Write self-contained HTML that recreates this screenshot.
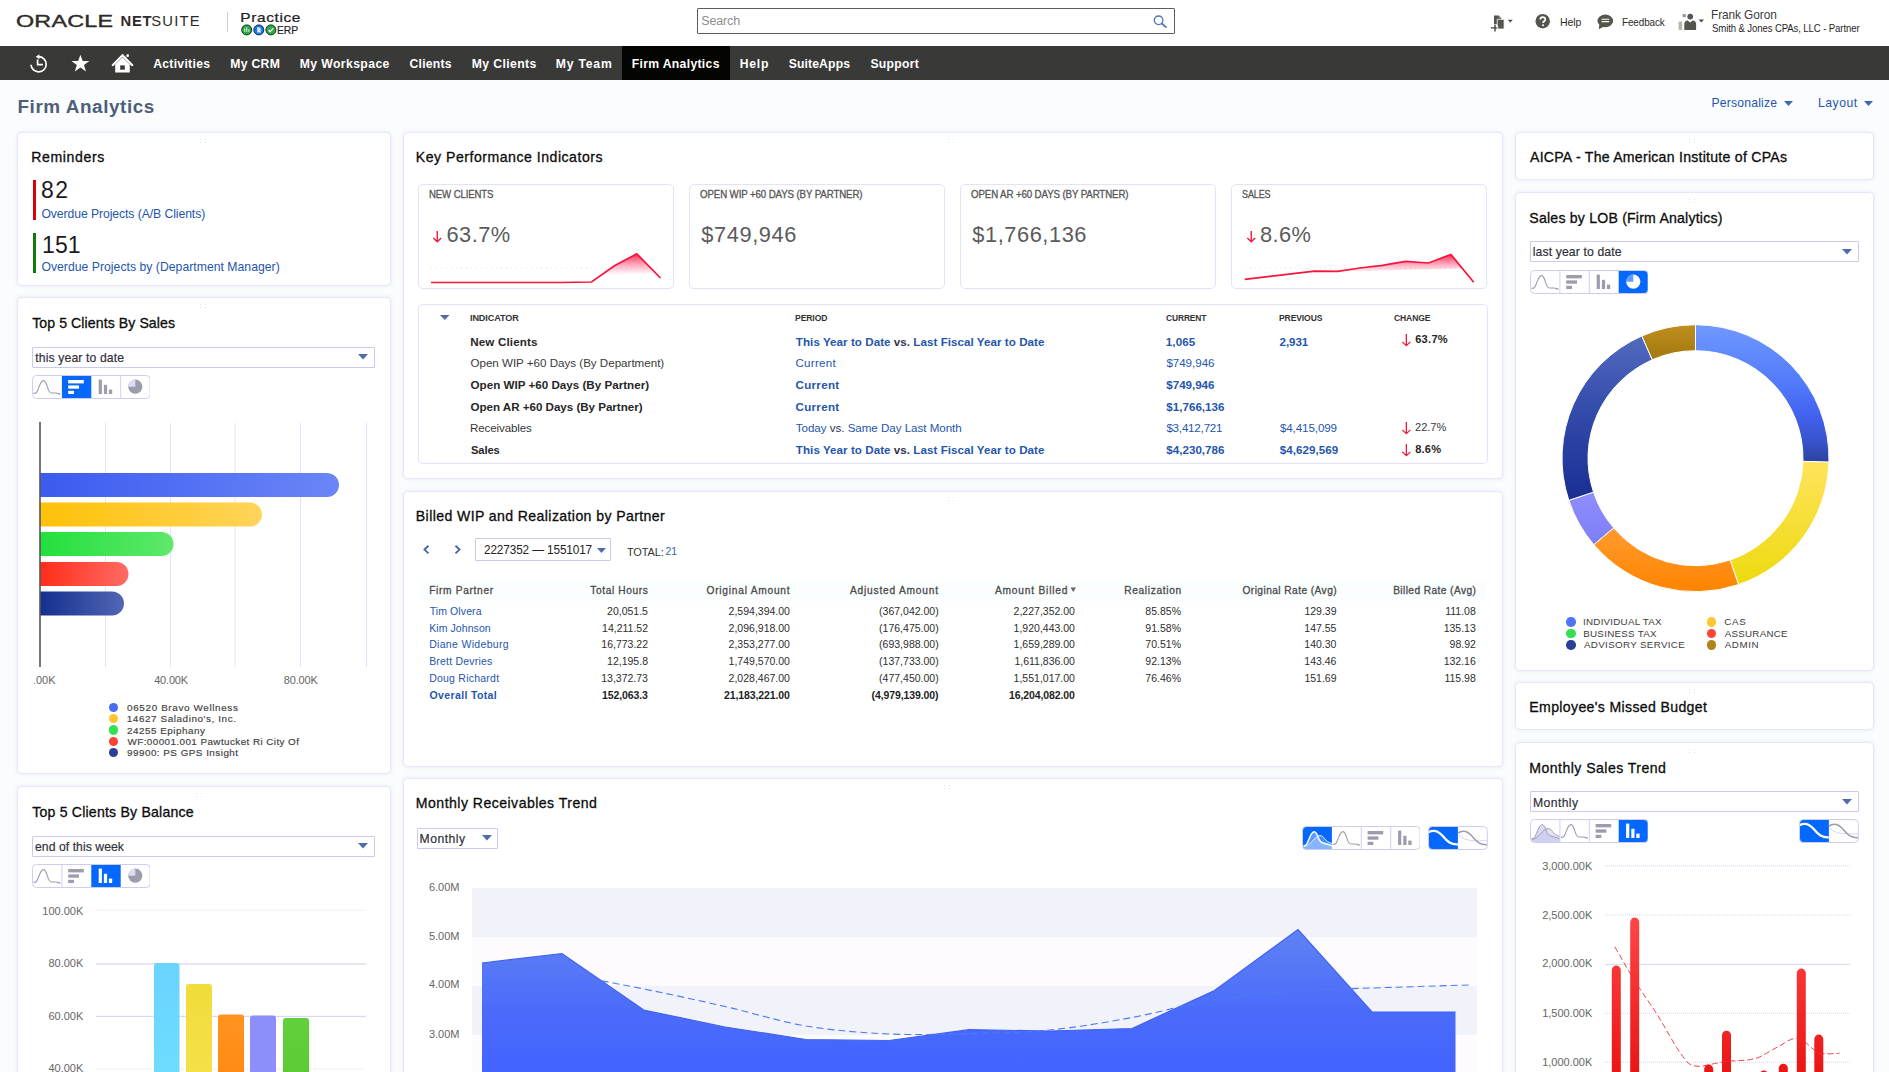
<!DOCTYPE html>
<html lang="en"><head><meta charset="utf-8"><title>Firm Analytics - NetSuite</title>
<style>
html,body{margin:0;padding:0;background:#fbfcfe;}
body{font-family:"Liberation Sans",Arial,sans-serif;}
#root{position:relative;width:1889px;height:1072px;overflow:hidden;background:#fbfcfe;}
#root div,#root svg,#root span{position:absolute;box-sizing:border-box;}
.t{white-space:nowrap;line-height:1;}
.card{background:#fff;border:1px solid #e6e8f8;border-radius:5px;box-shadow:0 0 3px 1px rgba(225,228,247,.5);}
.tile{background:#fff;border:1px solid #e2e2f8;border-radius:5px;}
.dd{background:#fff;border:1px solid #c9c9f2;border-radius:1px;}
.bg{background:#fff;border:1px solid #d0d0f4;border-radius:4px;overflow:hidden;}
</style></head>
<body><div id="root">
<div style="left:0px;top:0px;width:1889px;height:46px;background:#fff;"></div>
<span class="t" style="left:16.400px;top:13.000px;font-size:16.200px;color:#2e2a27;letter-spacing:0.150px;-webkit-text-stroke:0.350px;transform-origin:0 0;transform:scaleX(1.440);">ORACLE</span>
<div style="left:226.5px;top:11.5px;width:1px;height:20.5px;background:#cfcfcf;"></div>
<svg style="left:240px;top:23px" width="38" height="14" viewBox="0 0 38 14">
<circle cx="6.7" cy="6.9" r="5" fill="#2fa84a" stroke="#12351c" stroke-width="1"/>
<circle cx="18.8" cy="6.9" r="5" fill="#1f7be0" stroke="#0d2c55" stroke-width="1"/>
<circle cx="30.9" cy="6.9" r="5" fill="#2fa84a" stroke="#12351c" stroke-width="1"/>
<path d="M4.6 8.8V5.6M6.7 8.8V4.4M8.8 8.8V6.4" stroke="#d9f5df" stroke-width="1.1" fill="none"/>
<path d="M17.2 4.3h2.3l1.2 1.2v4h-3.5z" fill="#d6e8ff"/>
<path d="M28.6 7l1.6 1.6 3-3.2" stroke="#fff" stroke-width="1.3" fill="none"/>
</svg>
<div style="left:697px;top:7.5px;width:478px;height:26px;background:#fff;border:1px solid #5d5d5d;border-radius:1px;"></div>
<svg style="left:1152px;top:13.5px" width="16" height="15" viewBox="0 0 16 15">
<circle cx="6.6" cy="6.3" r="4.3" fill="none" stroke="#4f73b8" stroke-width="1.3"/>
<path d="M9.7 9.5L14 13.2" stroke="#4f73b8" stroke-width="1.7" stroke-linecap="round"/></svg>
<svg style="left:1489px;top:13px" width="26" height="20" viewBox="0 0 26 20">
<path d="M5 2.500h4.800l2.400 2.400v6.600H5z" fill="#55554d"/>
<path d="M9.800 2.500v2.400h2.400z" fill="#9c9c96"/>
<path d="M8.200 6.300h6.900v9.700H8.200z" fill="#55554d" stroke="#fff" stroke-width=".8"/>
<path d="M6 10.900v7.400M2 14.600h7.200" stroke="#fff" stroke-width="3" fill="none"/>
<path d="M6 11.400v7M1.800 14.900h6.600" stroke="#45453f" stroke-width="1.400" fill="none"/>
<path d="M18.800 6.800h5l-2.500 2.600z" fill="#4d4d47"/></svg>
<svg style="left:1534px;top:13px" width="17" height="17" viewBox="0 0 17 17">
<circle cx="8.7" cy="8.2" r="7.2" fill="#55554d"/>
<path d="M6.3 6.6c0-3.2 5-3.2 5-.2 0 1.8-2.3 1.9-2.3 3.7" stroke="#fff" stroke-width="1.7" fill="none"/>
<circle cx="9" cy="12.3" r="1" fill="#fff"/></svg>
<svg style="left:1596px;top:13px" width="19" height="18" viewBox="0 0 19 18">
<ellipse cx="9.3" cy="7.9" rx="7.8" ry="6.3" fill="#55554d"/>
<path d="M3.4 11.5L2.8 16.2 8 13.6z" fill="#55554d"/>
<path d="M5.6 6.3h7.6M5.6 8.6h7.6" stroke="#fff" stroke-width="1.1"/></svg>
<svg style="left:1677px;top:12px" width="30" height="20" viewBox="0 0 30 20">
<circle cx="13.2" cy="4.6" r="2.9" fill="#55554d"/>
<path d="M7.3 18v-6.2c0-2 1.5-3.4 3.4-3.4l2.5 2 2.5-2c1.900 0 3.400 1.400 3.400 3.400V18z" fill="#55554d"/>
<rect x="1.600" y="9.5" width="3.600" height="8.5" rx="1" fill="#b5b5b0"/>
<rect x="5.600" y="2" width="3.200" height="3.200" fill="#9a9a95"/>
<path d="M21.600 7.600h5.400l-2.700 2.800z" fill="#4d4d47"/></svg>
<div style="left:0px;top:46px;width:1889px;height:34px;background:#393937;"></div>
<div style="left:622px;top:46px;width:108px;height:34px;background:#040402;"></div>
<svg style="left:26px;top:50px" width="112" height="28" viewBox="0 0 112 28">
<g fill="none" stroke="#fff" stroke-width="1.7">
<path d="M5.000 14.800A7.600 7.600 0 1 0 12.600 6.700"/>
<path d="M11.600 9.500v5.200h5.300"/></g>
<path d="M13.400 4.300l-3.700 2.500 3.700 2.500z" fill="#fff"/>
<path d="M54.400 4.800l2.250 6.300h6.700l-5.400 3.950 2.050 6.450-5.600-4-5.600 4 2.050-6.450-5.400-3.950h6.700z" fill="#fff"/>
<path d="M86.200 15.800L96.500 5.200l10.300 10.600" fill="none" stroke="#fff" stroke-width="2.100"/>
<path d="M89.200 14.600l7.300-7.300 7.300 7.300v8h-14.600z" fill="#fff"/>
<rect x="94.200" y="15.400" width="4.600" height="4.300" fill="#393937"/>
<rect x="100.500" y="4.300" width="2.300" height="2.600" fill="#fff"/>
</svg>
<svg style="left:1783.5px;top:100.7px" width="10" height="6" viewBox="0 0 10 6"><path d="M0 0h9l-4.5 5z" fill="#3b67b8"/></svg>
<svg style="left:1863.5px;top:100.7px" width="10" height="6" viewBox="0 0 10 6"><path d="M0 0h9l-4.5 5z" fill="#3b67b8"/></svg>
<div class="card" style="left:17px;top:132px;width:373.5px;height:154px;"></div>
<svg style="left:200px;top:139px" width="8" height="6" viewBox="0 0 8 6"><g fill="#dfe1f3"><rect x="0" y="0" width="1" height="1"/><rect x="5" y="0" width="1" height="1"/><rect x="0" y="3" width="1" height="1"/><rect x="5" y="3" width="1" height="1"/></g></svg>
<div style="left:33px;top:180px;width:3px;height:39.5px;background:#d8000c;"></div>
<div style="left:33px;top:233px;width:3px;height:39.5px;background:#117a0c;"></div>
<div class="card" style="left:17px;top:297px;width:373.5px;height:476.5px;"></div>
<svg style="left:200px;top:304px" width="8" height="6" viewBox="0 0 8 6"><g fill="#dfe1f3"><rect x="0" y="0" width="1" height="1"/><rect x="5" y="0" width="1" height="1"/><rect x="0" y="3" width="1" height="1"/><rect x="5" y="3" width="1" height="1"/></g></svg>
<div class="dd" style="left:32px;top:346.5px;width:342.5px;height:21px;"></div>
<svg style="left:358.0px;top:354.4px" width="11" height="6.5" viewBox="0 0 11 6.5"><path d="M0 0h10l-5.0 5.5z" fill="#4f6ca8"/></svg>
<svg style="left:31.7px;top:375.2px" width="118.6" height="24" viewBox="0 0 118.6 24"><defs><clipPath id="cp31_375"><rect x="0.5" y="0.5" width="117.6" height="23" rx="4"/></clipPath></defs><rect x="0.5" y="0.5" width="117.6" height="23" rx="4" fill="#fff"/><g clip-path="url(#cp31_375)"><rect x="29.9" y="0" width="29.4" height="24" fill="#0568fd"/><path d="M1.5 17.8c1.500 1.300 3.200 0 4.300-2.800 1.900-4.800 3.100-9.400 5.600-9.400s3.100 3.600 4.300 7.300c.900 2.800 1.900 5 3.700 5.100h4.600c1.800 0 2.800 1 4.400 1.200" fill="none" stroke="#9c9cac" stroke-width="1.1"/><rect x="36.199999999999996" y="5" width="15.600" height="3.400" fill="#fff"/><rect x="36.199999999999996" y="10.400" width="10.800" height="3.300" fill="#fff"/><rect x="36.199999999999996" y="15.800" width="5.800" height="3.200" fill="#fff"/><rect x="66.7" y="4.600" width="3.200" height="14.400" fill="#9c9cac"/><rect x="71.89999999999999" y="9.800" width="3.200" height="9.200" fill="#9c9cac"/><rect x="76.9" y="14.600" width="3.300" height="4.400" fill="#9c9cac"/><circle cx="103.29999999999998" cy="11.700" r="7.100" fill="#9c9cac"/><path d="M103.29999999999998 11.700V4.600A7.100 7.100 0 0 0 96.19999999999999 11.700z" fill="#dcdcf4"/></g><path d="M88.7 1v22" stroke="#cfcff3" stroke-width="1"/><rect x="0.5" y="0.5" width="117.6" height="23" rx="4" fill="none" stroke="#cdcdf3"/></svg>
<svg style="left:17px;top:415px" width="373" height="275" viewBox="17 415 373 275"><defs><linearGradient id="hb0" x1="0" x2="1" y1="0" y2="0"><stop offset="0" stop-color="#3b5bf0"/><stop offset="1" stop-color="#6b86f7"/></linearGradient><linearGradient id="hb1" x1="0" x2="1" y1="0" y2="0"><stop offset="0" stop-color="#ffc107"/><stop offset="1" stop-color="#ffd45a"/></linearGradient><linearGradient id="hb2" x1="0" x2="1" y1="0" y2="0"><stop offset="0" stop-color="#22e03c"/><stop offset="1" stop-color="#5fe86c"/></linearGradient><linearGradient id="hb3" x1="0" x2="1" y1="0" y2="0"><stop offset="0" stop-color="#ff2d1a"/><stop offset="1" stop-color="#ff6b63"/></linearGradient><linearGradient id="hb4" x1="0" x2="1" y1="0" y2="0"><stop offset="0" stop-color="#14308f"/><stop offset="1" stop-color="#5267b3"/></linearGradient></defs><path d="M105.5 423V667" stroke="#e4e4f8" stroke-width="1"/><path d="M170.5 423V667" stroke="#e4e4f8" stroke-width="1"/><path d="M235 423V667" stroke="#e4e4f8" stroke-width="1"/><path d="M300.5 423V667" stroke="#e4e4f8" stroke-width="1"/><path d="M366.5 423V667" stroke="#e4e4f8" stroke-width="1"/><path d="M40.5 473H327a12 12 0 0 1 0 24H40.500z" fill="url(#hb0)"/><path d="M40.5 502.5H250a12 12 0 0 1 0 24H40.500z" fill="url(#hb1)"/><path d="M40.5 532H161.5a12 12 0 0 1 0 24H40.500z" fill="url(#hb2)"/><path d="M40.5 562H116.5a12 12 0 0 1 0 24H40.500z" fill="url(#hb3)"/><path d="M40.5 591.5H112a12 12 0 0 1 0 24H40.500z" fill="url(#hb4)"/><path d="M40 422V667" stroke="#2b2b2b" stroke-width="1.300"/></svg>
<div style="left:33.500px;top:672px;width:28.500px;height:16px;overflow:hidden;"><span class="t" style="right:6.500px;top:2.700px;font-size:11px;color:#666;">0.00K</span></div>
<div style="left:109px;top:702.8px;width:9.4px;height:9.4px;background:#4a6cf2;border-radius:50%;"></div>
<div style="left:109px;top:714.05px;width:9.4px;height:9.4px;background:#ffc42e;border-radius:50%;"></div>
<div style="left:109px;top:725.3px;width:9.4px;height:9.4px;background:#35e050;border-radius:50%;"></div>
<div style="left:109px;top:736.55px;width:9.4px;height:9.4px;background:#ff4132;border-radius:50%;"></div>
<div style="left:109px;top:747.8px;width:9.4px;height:9.4px;background:#2a3f98;border-radius:50%;"></div>
<div class="card" style="left:17px;top:786px;width:373.5px;height:300px;"></div>
<svg style="left:196px;top:793px" width="8" height="6" viewBox="0 0 8 6"><g fill="#dfe1f3"><rect x="0" y="0" width="1" height="1"/><rect x="5" y="0" width="1" height="1"/><rect x="0" y="3" width="1" height="1"/><rect x="5" y="3" width="1" height="1"/></g></svg>
<div class="dd" style="left:32px;top:835.5px;width:342.5px;height:21px;"></div>
<svg style="left:358.0px;top:843.4px" width="11" height="6.5" viewBox="0 0 11 6.5"><path d="M0 0h10l-5.0 5.5z" fill="#4f6ca8"/></svg>
<svg style="left:31.7px;top:864.2px" width="118.6" height="24" viewBox="0 0 118.6 24"><defs><clipPath id="cp31_864"><rect x="0.5" y="0.5" width="117.6" height="23" rx="4"/></clipPath></defs><rect x="0.5" y="0.5" width="117.6" height="23" rx="4" fill="#fff"/><g clip-path="url(#cp31_864)"><rect x="59.3" y="0" width="29.4" height="24" fill="#0568fd"/><path d="M1.5 17.8c1.500 1.300 3.200 0 4.300-2.800 1.900-4.800 3.100-9.400 5.600-9.400s3.100 3.600 4.300 7.300c.900 2.800 1.900 5 3.700 5.100h4.600c1.800 0 2.800 1 4.400 1.200" fill="none" stroke="#9c9cac" stroke-width="1.1"/><rect x="36.199999999999996" y="5" width="15.600" height="3.400" fill="#9c9cac"/><rect x="36.199999999999996" y="10.400" width="10.800" height="3.300" fill="#9c9cac"/><rect x="36.199999999999996" y="15.800" width="5.800" height="3.200" fill="#9c9cac"/><rect x="66.7" y="4.600" width="3.200" height="14.400" fill="#fff"/><rect x="71.89999999999999" y="9.800" width="3.200" height="9.200" fill="#fff"/><rect x="76.9" y="14.600" width="3.300" height="4.400" fill="#fff"/><circle cx="103.29999999999998" cy="11.700" r="7.100" fill="#9c9cac"/><path d="M103.29999999999998 11.700V4.600A7.100 7.100 0 0 0 96.19999999999999 11.700z" fill="#dcdcf4"/></g><path d="M29.9 1v22" stroke="#cfcff3" stroke-width="1"/><rect x="0.5" y="0.5" width="117.6" height="23" rx="4" fill="none" stroke="#cdcdf3"/></svg>
<svg style="left:17px;top:900px" width="373" height="172" viewBox="17 900 373 172"><defs><linearGradient id="vb0" x1="0" x2="0" y1="0" y2="1"><stop offset="0" stop-color="#69d4ff"/><stop offset="1" stop-color="#6edcff"/></linearGradient><linearGradient id="vb1" x1="0" x2="0" y1="0" y2="1"><stop offset="0" stop-color="#f2dc3a"/><stop offset="1" stop-color="#f5e04a"/></linearGradient><linearGradient id="vb2" x1="0" x2="0" y1="0" y2="1"><stop offset="0" stop-color="#ff931f"/><stop offset="1" stop-color="#ff8a12"/></linearGradient><linearGradient id="vb3" x1="0" x2="0" y1="0" y2="1"><stop offset="0" stop-color="#8e8efa"/><stop offset="1" stop-color="#8f8ffb"/></linearGradient><linearGradient id="vb4" x1="0" x2="0" y1="0" y2="1"><stop offset="0" stop-color="#62cf3c"/><stop offset="1" stop-color="#5ccb33"/></linearGradient></defs><path d="M97.500 910.300H365.500" stroke="#dedef4" stroke-width="1" stroke-dasharray="1 1"/><path d="M96 964H366M96 1016.300H366" stroke="#cfcff5" stroke-width="1"/><path d="M97.500 1069.200H365.500" stroke="#dedef4" stroke-width="1" stroke-dasharray="1 1"/><path d="M154 1080V966a3 3 0 0 1 3-3H176.5a3 3 0 0 1 3 3V1080z" fill="url(#vb0)"/><path d="M186 1080V987a3 3 0 0 1 3-3H209a3 3 0 0 1 3 3V1080z" fill="url(#vb1)"/><path d="M218 1080V1017.5a3 3 0 0 1 3-3H241a3 3 0 0 1 3 3V1080z" fill="url(#vb2)"/><path d="M250 1080V1018.5a3 3 0 0 1 3-3H273a3 3 0 0 1 3 3V1080z" fill="url(#vb3)"/><path d="M283 1080V1021a3 3 0 0 1 3-3H306a3 3 0 0 1 3 3V1080z" fill="url(#vb4)"/></svg>
<div class="card" style="left:403px;top:132px;width:1099.5px;height:346.5px;"></div>
<svg style="left:948px;top:139px" width="8" height="6" viewBox="0 0 8 6"><g fill="#dfe1f3"><rect x="0" y="0" width="1" height="1"/><rect x="5" y="0" width="1" height="1"/><rect x="0" y="3" width="1" height="1"/><rect x="5" y="3" width="1" height="1"/></g></svg>
<div class="tile" style="left:418px;top:183.5px;width:255.7px;height:105.7px;"></div>
<div class="tile" style="left:689px;top:183.5px;width:255.7px;height:105.7px;"></div>
<div class="tile" style="left:960px;top:183.5px;width:255.7px;height:105.7px;"></div>
<div class="tile" style="left:1231.3px;top:183.5px;width:255.7px;height:105.7px;"></div>
<svg style="left:432px;top:230px" width="10.5" height="13" viewBox="-1 -1 10.5 13"><path d="M4.25 0V10.5M0.300 6.95L4.25 10.7L8.2 6.95" fill="none" stroke="#f01b3c" stroke-width="1.4"/></svg>
<svg style="left:1246px;top:230px" width="10.5" height="13" viewBox="-1 -1 10.5 13"><path d="M4.25 0V10.5M0.300 6.95L4.25 10.7L8.2 6.95" fill="none" stroke="#f01b3c" stroke-width="1.4"/></svg>
<svg style="left:418px;top:184px" width="1070" height="105" viewBox="418 184 1070 105"><defs><linearGradient id="sp" x1="0" x2="0" y1="0" y2="1"><stop offset="0" stop-color="#ff1f45" stop-opacity=".95"/><stop offset="1" stop-color="#ff6f95" stop-opacity=".05"/></linearGradient></defs><path d="M431 268.300H660" stroke="#e3e3ef" stroke-width="1" stroke-dasharray="1 4"/><path d="M1245 268.300H1471" stroke="#e3e3ef" stroke-width="1" stroke-dasharray="1 4"/><path d="M602 274.500L614.500 265.700L636.800 253.800L651.500 268.300L653 273z" fill="url(#sp)"/><path d="M431 282.500H560L591.500 282L614.500 265.700L636.800 253.800L660.500 278" fill="none" stroke="#f5153c" stroke-width="1.700" stroke-linejoin="miter"/><path d="M1292 273L1314.400 271.200L1337.600 271.400L1360 268L1382.400 265.400L1405.500 261.400L1428.600 263L1450.900 254.400L1462 268.300z" fill="url(#sp)"/><path d="M1244.800 279.300L1314.400 271.200L1337.600 271.400L1360 268L1382.400 265.400L1405.500 261.400L1428.600 263L1450.900 254.400L1473.700 282.200" fill="none" stroke="#f5153c" stroke-width="1.700"/></svg>
<div style="left:417.5px;top:304px;width:1070px;height:159.5px;background:#fff;border:1px solid #e2e2f8;border-radius:5px;"></div>
<svg style="left:439.5px;top:315px" width="10.5" height="6" viewBox="0 0 10.5 6"><path d="M0 0h9.5l-4.75 5z" fill="#4f6ca8"/></svg>
<svg style="left:1401px;top:333px" width="10.7" height="14" viewBox="-1 -1 10.7 14"><path d="M4.35 0V11.5M0.300 7.8500000000000005L4.35 11.7L8.399999999999999 7.8500000000000005" fill="none" stroke="#f01b3c" stroke-width="1.3"/></svg>
<svg style="left:1401px;top:421px" width="10.7" height="14" viewBox="-1 -1 10.7 14"><path d="M4.35 0V11.5M0.300 7.8500000000000005L4.35 11.7L8.399999999999999 7.8500000000000005" fill="none" stroke="#f01b3c" stroke-width="1.3"/></svg>
<svg style="left:1401px;top:442.5px" width="10.7" height="14" viewBox="-1 -1 10.7 14"><path d="M4.35 0V11.5M0.300 7.8500000000000005L4.35 11.7L8.399999999999999 7.8500000000000005" fill="none" stroke="#f01b3c" stroke-width="1.3"/></svg>
<div class="card" style="left:403px;top:490.5px;width:1099.5px;height:276px;"></div>
<svg style="left:948px;top:497px" width="8" height="6" viewBox="0 0 8 6"><g fill="#dfe1f3"><rect x="0" y="0" width="1" height="1"/><rect x="5" y="0" width="1" height="1"/><rect x="0" y="3" width="1" height="1"/><rect x="5" y="3" width="1" height="1"/></g></svg>
<svg style="left:423px;top:544.7px" width="7" height="10" viewBox="0 0 7 10"><path d="M5.500 0.800L1.500 4.600L5.500 8.400" fill="none" stroke="#4a66a8" stroke-width="1.900"/></svg>
<svg style="left:454px;top:544.7px" width="7" height="10" viewBox="0 0 7 10"><path d="M1.500 0.800L5.500 4.600L1.500 8.400" fill="none" stroke="#4a66a8" stroke-width="1.900"/></svg>
<div class="dd" style="left:475px;top:538px;width:136px;height:22.5px;"></div>
<svg style="left:596.5px;top:548px" width="10" height="6" viewBox="0 0 10 6"><path d="M0 0h9l-4.5 5z" fill="#4f6ca8"/></svg>
<div style="left:420px;top:581px;width:1066px;height:20px;background:#fbfefe;"></div>
<svg style="left:1069.500px;top:586.500px" width="7" height="6" viewBox="0 0 7 6"><path d="M0.500 0.500h5.500l-2.750 4.600z" fill="#666"/></svg>
<div class="card" style="left:403px;top:778px;width:1099.5px;height:310px;"></div>
<svg style="left:944px;top:785px" width="8" height="6" viewBox="0 0 8 6"><g fill="#dfe1f3"><rect x="0" y="0" width="1" height="1"/><rect x="5" y="0" width="1" height="1"/><rect x="0" y="3" width="1" height="1"/><rect x="5" y="3" width="1" height="1"/></g></svg>
<div class="dd" style="left:417px;top:827.5px;width:80.5px;height:21px;"></div>
<svg style="left:482px;top:835.4px" width="11" height="6.5" viewBox="0 0 11 6.5"><path d="M0 0h10l-5.0 5.5z" fill="#4f6ca8"/></svg>
<svg style="left:1301.7px;top:826.2px" width="118.6" height="24" viewBox="0 0 118.6 24"><defs><clipPath id="cp1301_826"><rect x="0.5" y="0.5" width="117.6" height="23" rx="4"/></clipPath></defs><rect x="0.5" y="0.5" width="117.6" height="23" rx="4" fill="#fff"/><g clip-path="url(#cp1301_826)"><rect x="0.5" y="0" width="29.4" height="24" fill="#0568fd"/><path d="M1.5 19.500c2.500 1 4-2.500 5.500-6.500s3-7.300 5.200-7.300 3.300 3.500 4.300 6.500c1.400 4 4.500 5.200 8 5.800 2 .400 4 1.200 5.400 2V23H1.5z" fill="rgba(255,255,255,.35)"/><path d="M1.5 20.500c3.500 0 6.500-3 9-5.500 2.500-2.600 4.700-5.500 7.500-5.500s4.300 3 6 4.800c1.700 1.800 4 2.400 5.900 3V23H1.5z" fill="rgba(255,255,255,.25)"/><path d="M1.5 19.500c2.500 1 4-2.500 5.500-6.500s3-7.300 5.200-7.300 3.300 3.500 4.300 6.500c1.400 4 4.500 5.200 8 5.800 2 .400 4 1.200 5.400 2" fill="none" stroke="#fff" stroke-width="1.5"/><path d="M1.5 20.500c3.500 0 6.500-3 9-5.500 2.500-2.600 4.700-5.500 7.500-5.500s4.300 3 6 4.800c1.700 1.800 4 2.400 5.900 3" fill="none" stroke="#fff" stroke-width="1" opacity="0.8"/><path d="M30.9 17.8c1.500 1.300 3.200 0 4.300-2.800 1.900-4.800 3.100-9.400 5.600-9.400s3.100 3.600 4.300 7.300c.900 2.800 1.900 5 3.700 5.100h4.600c1.800 0 2.800 1 4.400 1.200" fill="none" stroke="#9c9cac" stroke-width="1.1"/><rect x="65.6" y="5" width="15.600" height="3.400" fill="#9c9cac"/><rect x="65.6" y="10.400" width="10.800" height="3.300" fill="#9c9cac"/><rect x="65.6" y="15.800" width="5.800" height="3.200" fill="#9c9cac"/><rect x="96.1" y="4.600" width="3.200" height="14.400" fill="#9c9cac"/><rect x="101.29999999999998" y="9.800" width="3.200" height="9.200" fill="#9c9cac"/><rect x="106.29999999999998" y="14.600" width="3.300" height="4.400" fill="#9c9cac"/></g><path d="M59.3 1v22" stroke="#cfcff3" stroke-width="1"/><path d="M88.7 1v22" stroke="#cfcff3" stroke-width="1"/><rect x="0.5" y="0.5" width="117.6" height="23" rx="4" fill="none" stroke="#cdcdf3"/></svg>
<svg style="left:1428.2px;top:826.2px" width="59.8" height="24" viewBox="0 0 59.8 24"><defs><clipPath id="cp1428_826"><rect x="0.5" y="0.5" width="58.8" height="23" rx="4"/></clipPath></defs><rect x="0.5" y="0.5" width="58.8" height="23" rx="4" fill="#fff"/><g clip-path="url(#cp1428_826)"><rect x="0.5" y="0" width="29.4" height="24" fill="#0568fd"/><path d="M0.5 6.200c4.500-2.300 9.500-1.800 14.200 3.800 4.800 5.800 8.300 8.800 15.200 8.400" fill="none" stroke="#fff" stroke-width="2.3"/><path d="M30.9 9c3 3.500 8 5.200 13 5.600 5 .400 10 .100 15 .100" fill="none" stroke="#d5d5f2" stroke-width="1"/><path d="M29.9 7c4.500-2.800 9.500-2.300 14.200 3.300 4.800 5.800 8.300 8.800 15.200 8.400" fill="none" stroke="#9c9cac" stroke-width="1.500"/></g><rect x="0.5" y="0.5" width="58.8" height="23" rx="4" fill="none" stroke="#cdcdf3"/></svg>
<svg style="left:403px;top:880px" width="1100" height="192" viewBox="403 880 1100 192"><defs><linearGradient id="ar" x1="0" x2="0" y1="0" y2="1"><stop offset="0" stop-color="#5f82f4"/><stop offset=".55" stop-color="#4a6bfa"/><stop offset="1" stop-color="#4263ff"/></linearGradient></defs><rect x="472" y="888" width="1005" height="49.500" fill="#f1f2fa"/><rect x="472" y="937.500" width="1005" height="48.500" fill="#fdfbfe"/><rect x="472" y="986" width="1005" height="49" fill="#f1f2fa"/><rect x="472" y="1035" width="1005" height="49" fill="#fdfbfe"/><path d="M482 963L562 953.5L643.75 1010L725 1027L806 1039.5L889 1040.5L969 1029.7L1050 1031L1132 1028.5L1214.5 990.5L1298 929.5L1372 1012L1455.5 1012L1455.5 1080L482 1080z" fill="url(#ar)"/><path d="M482 963L562 953.5L643.75 1010L725 1027L806 1039.5L889 1040.5L969 1029.7L1050 1031L1132 1028.5L1214.5 990.5L1298 929.5L1372 1012L1455.5 1012" fill="none" stroke="#3f63f0" stroke-width="1.200"/><path d="M482.0 963.0L488.2 963.8L496.3 964.9L506.1 966.1L516.9 967.6L528.3 969.1L540.0 970.7L551.4 972.4L562.0 974.0L572.2 975.7L582.4 977.4L592.6 979.2L602.9 981.1L613.2 983.0L623.5 985.0L633.8 987.0L644.0 989.0L654.2 991.1L664.3 993.2L674.4 995.3L684.6 997.5L694.7 999.7L704.8 1001.9L714.9 1004.2L725.0 1006.5L735.1 1008.9L745.2 1011.5L755.3 1014.2L765.4 1016.8L775.5 1019.4L785.6 1021.9L795.8 1024.1L806.0 1026.0L816.3 1027.6L826.7 1029.0L837.1 1030.2L847.6 1031.2L858.0 1032.1L868.4 1032.9L878.8 1033.5L889.0 1034.0L899.1 1034.4L909.2 1034.5L919.2 1034.6L929.1 1034.5L939.1 1034.3L949.0 1034.0L959.0 1033.8L969.0 1033.5L979.1 1033.3L989.2 1033.0L999.3 1032.8L1009.4 1032.5L1019.5 1032.1L1029.7 1031.6L1039.8 1030.9L1050.0 1030.0L1060.2 1028.9L1070.4 1027.6L1080.7 1026.2L1090.9 1024.6L1101.2 1023.0L1111.5 1021.2L1121.7 1019.4L1132.0 1017.5L1142.2 1015.5L1152.5 1013.2L1162.7 1010.9L1172.9 1008.4L1183.1 1006.0L1193.4 1003.7L1203.7 1001.6L1214.0 999.8L1224.5 998.2L1235.1 996.8L1245.8 995.6L1256.5 994.4L1267.1 993.4L1277.7 992.5L1288.0 991.7L1298.0 990.9L1307.6 990.3L1316.7 989.8L1325.5 989.4L1334.2 989.1L1343.0 988.8L1352.1 988.6L1361.7 988.3L1372.0 988.0L1383.7 987.6L1396.9 987.2L1411.0 986.8L1425.1 986.3L1438.7 985.9L1451.0 985.5L1461.4 985.2L1469.0 985.0" fill="none" stroke="#4f7cf0" stroke-width="1.100" stroke-dasharray="7 4"/></svg>
<div class="card" style="left:1514.5px;top:132px;width:359.5px;height:47.5px;"></div>
<svg style="left:1689px;top:139px" width="8" height="6" viewBox="0 0 8 6"><g fill="#dfe1f3"><rect x="0" y="0" width="1" height="1"/><rect x="5" y="0" width="1" height="1"/><rect x="0" y="3" width="1" height="1"/><rect x="5" y="3" width="1" height="1"/></g></svg>
<div class="card" style="left:1514.5px;top:192px;width:359.5px;height:478.5px;"></div>
<svg style="left:1689px;top:199px" width="8" height="6" viewBox="0 0 8 6"><g fill="#dfe1f3"><rect x="0" y="0" width="1" height="1"/><rect x="5" y="0" width="1" height="1"/><rect x="0" y="3" width="1" height="1"/><rect x="5" y="3" width="1" height="1"/></g></svg>
<div class="dd" style="left:1530px;top:241px;width:328.5px;height:21px;"></div>
<svg style="left:1842.0px;top:248.9px" width="11" height="6.5" viewBox="0 0 11 6.5"><path d="M0 0h10l-5.0 5.5z" fill="#4f6ca8"/></svg>
<svg style="left:1529.7px;top:270px" width="118.6" height="24" viewBox="0 0 118.6 24"><defs><clipPath id="cp1529_270"><rect x="0.5" y="0.5" width="117.6" height="23" rx="4"/></clipPath></defs><rect x="0.5" y="0.5" width="117.6" height="23" rx="4" fill="#fff"/><g clip-path="url(#cp1529_270)"><rect x="88.7" y="0" width="29.4" height="24" fill="#0568fd"/><path d="M1.5 17.8c1.500 1.300 3.200 0 4.300-2.800 1.900-4.800 3.100-9.400 5.600-9.400s3.100 3.600 4.300 7.300c.900 2.800 1.900 5 3.700 5.100h4.600c1.800 0 2.800 1 4.400 1.200" fill="none" stroke="#9c9cac" stroke-width="1.1"/><rect x="36.199999999999996" y="5" width="15.600" height="3.400" fill="#9c9cac"/><rect x="36.199999999999996" y="10.400" width="10.800" height="3.300" fill="#9c9cac"/><rect x="36.199999999999996" y="15.800" width="5.800" height="3.200" fill="#9c9cac"/><rect x="66.7" y="4.600" width="3.200" height="14.400" fill="#9c9cac"/><rect x="71.89999999999999" y="9.800" width="3.200" height="9.200" fill="#9c9cac"/><rect x="76.9" y="14.600" width="3.300" height="4.400" fill="#9c9cac"/><circle cx="103.29999999999998" cy="11.700" r="7.100" fill="#fff"/><path d="M103.29999999999998 11.700V4.600A7.100 7.100 0 0 0 96.19999999999999 11.700z" fill="#5e9bff"/></g><path d="M29.9 1v22" stroke="#cfcff3" stroke-width="1"/><path d="M59.3 1v22" stroke="#cfcff3" stroke-width="1"/><rect x="0.5" y="0.5" width="117.6" height="23" rx="4" fill="none" stroke="#cdcdf3"/></svg>
<svg style="left:1555px;top:318px" width="282" height="282" viewBox="1555 318 282 282"><defs><linearGradient id="lobA" gradientUnits="userSpaceOnUse" x1="0" x2="0" y1="324" y2="462"><stop offset="0" stop-color="#7099ff"/><stop offset=".45" stop-color="#5179fb"/><stop offset=".65" stop-color="#4363f1"/><stop offset=".85" stop-color="#3853cc"/><stop offset="1" stop-color="#2b439d"/></linearGradient><linearGradient id="lobB" gradientUnits="userSpaceOnUse" x1="0" x2="0" y1="458" y2="592"><stop offset="0" stop-color="#ffe45e"/><stop offset="1" stop-color="#ecd90a"/></linearGradient><linearGradient id="lobC" gradientUnits="userSpaceOnUse" x1="0" x2="0" y1="530" y2="592"><stop offset="0" stop-color="#ff9a2e"/><stop offset="1" stop-color="#ff8400"/></linearGradient><linearGradient id="lobD" gradientUnits="userSpaceOnUse" x1="0" x2="0" y1="495" y2="540"><stop offset="0" stop-color="#8d8dff"/><stop offset="1" stop-color="#8080f5"/></linearGradient><linearGradient id="lobE" gradientUnits="userSpaceOnUse" x1="0" x2="0" y1="340" y2="500"><stop offset="0" stop-color="#5068bd"/><stop offset=".5" stop-color="#3048a8"/><stop offset="1" stop-color="#1a2e92"/></linearGradient><linearGradient id="lobF" gradientUnits="userSpaceOnUse" x1="0" x2="0" y1="324" y2="352"><stop offset="0" stop-color="#c0901f"/><stop offset="1" stop-color="#a87c12"/></linearGradient></defs><path d="M1695.50 324.70A133.5 133.5 0 0 1 1828.94 462.16L1802.95 461.39A107.5 107.5 0 0 0 1695.50 350.70z" fill="url(#lobA)" stroke="#fff" stroke-width="1"/><path d="M1828.94 462.16A133.5 133.5 0 0 1 1738.52 584.58L1730.14 559.96A107.5 107.5 0 0 0 1802.95 461.39z" fill="url(#lobB)" stroke="#fff" stroke-width="1"/><path d="M1738.52 584.58A133.5 133.5 0 0 1 1593.83 544.72L1613.63 527.87A107.5 107.5 0 0 0 1730.14 559.96z" fill="url(#lobC)" stroke="#fff" stroke-width="1"/><path d="M1593.83 544.72A133.5 133.5 0 0 1 1568.83 500.34L1593.50 492.13A107.5 107.5 0 0 0 1613.63 527.87z" fill="url(#lobD)" stroke="#fff" stroke-width="1"/><path d="M1568.83 500.34A133.5 133.5 0 0 1 1641.84 335.96L1652.29 359.77A107.5 107.5 0 0 0 1593.50 492.13z" fill="url(#lobE)" stroke="#fff" stroke-width="1"/><path d="M1641.84 335.96A133.5 133.5 0 0 1 1695.50 324.70L1695.50 350.70A107.5 107.5 0 0 0 1652.29 359.77z" fill="url(#lobF)" stroke="#fff" stroke-width="1"/></svg>
<div style="left:1566.3px;top:617.3px;width:9.4px;height:9.4px;background:#4f74f6;border-radius:50%;"></div>
<div style="left:1566.3px;top:628.8px;width:9.4px;height:9.4px;background:#35df52;border-radius:50%;"></div>
<div style="left:1566.3px;top:640.3px;width:9.4px;height:9.4px;background:#2b4099;border-radius:50%;"></div>
<div style="left:1707.0px;top:617.3px;width:9.4px;height:9.4px;background:#ffc730;border-radius:50%;"></div>
<div style="left:1707.0px;top:628.8px;width:9.4px;height:9.4px;background:#ff4436;border-radius:50%;"></div>
<div style="left:1707.0px;top:640.3px;width:9.4px;height:9.4px;background:#b0841a;border-radius:50%;"></div>
<div class="card" style="left:1514.5px;top:682px;width:359.5px;height:48px;"></div>
<svg style="left:1689px;top:689px" width="8" height="6" viewBox="0 0 8 6"><g fill="#dfe1f3"><rect x="0" y="0" width="1" height="1"/><rect x="5" y="0" width="1" height="1"/><rect x="0" y="3" width="1" height="1"/><rect x="5" y="3" width="1" height="1"/></g></svg>
<div class="card" style="left:1514.5px;top:742px;width:359.5px;height:340px;"></div>
<svg style="left:1689px;top:749px" width="8" height="6" viewBox="0 0 8 6"><g fill="#dfe1f3"><rect x="0" y="0" width="1" height="1"/><rect x="5" y="0" width="1" height="1"/><rect x="0" y="3" width="1" height="1"/><rect x="5" y="3" width="1" height="1"/></g></svg>
<div class="dd" style="left:1530px;top:791.2px;width:328.7px;height:21px;"></div>
<svg style="left:1842.2px;top:799.1px" width="11" height="6.5" viewBox="0 0 11 6.5"><path d="M0 0h10l-5.0 5.5z" fill="#4f6ca8"/></svg>
<svg style="left:1529.7px;top:819.2px" width="118.6" height="24" viewBox="0 0 118.6 24"><defs><clipPath id="cp1529_819"><rect x="0.5" y="0.5" width="117.6" height="23" rx="4"/></clipPath></defs><rect x="0.5" y="0.5" width="117.6" height="23" rx="4" fill="#fff"/><g clip-path="url(#cp1529_819)"><rect x="88.7" y="0" width="29.4" height="24" fill="#0568fd"/><path d="M1.5 19.500c2.500 1 4-2.500 5.500-6.500s3-7.300 5.200-7.300 3.300 3.500 4.300 6.500c1.400 4 4.500 5.200 8 5.800 2 .400 4 1.200 5.400 2V23H1.5z" fill="rgba(170,170,225,.45)"/><path d="M1.5 20.500c3.500 0 6.500-3 9-5.500 2.500-2.600 4.700-5.500 7.500-5.500s4.300 3 6 4.800c1.700 1.800 4 2.400 5.900 3V23H1.5z" fill="rgba(200,200,240,.5)"/><path d="M1.5 19.500c2.500 1 4-2.500 5.500-6.500s3-7.300 5.200-7.300 3.300 3.500 4.300 6.500c1.400 4 4.500 5.200 8 5.800 2 .400 4 1.200 5.400 2" fill="none" stroke="#9c9cac" stroke-width="1"/><path d="M1.5 20.500c3.500 0 6.500-3 9-5.500 2.500-2.600 4.700-5.500 7.500-5.500s4.300 3 6 4.800c1.700 1.800 4 2.400 5.900 3" fill="none" stroke="#9c9cac" stroke-width="0.9" opacity="1"/><path d="M30.9 17.8c1.500 1.300 3.200 0 4.300-2.800 1.900-4.800 3.100-9.400 5.600-9.400s3.100 3.600 4.300 7.300c.900 2.800 1.900 5 3.700 5.100h4.600c1.800 0 2.800 1 4.400 1.200" fill="none" stroke="#9c9cac" stroke-width="1.1"/><rect x="65.6" y="5" width="15.600" height="3.400" fill="#9c9cac"/><rect x="65.6" y="10.400" width="10.800" height="3.300" fill="#9c9cac"/><rect x="65.6" y="15.800" width="5.800" height="3.200" fill="#9c9cac"/><rect x="96.1" y="4.600" width="3.200" height="14.400" fill="#fff"/><rect x="101.29999999999998" y="9.800" width="3.200" height="9.200" fill="#fff"/><rect x="106.29999999999998" y="14.600" width="3.300" height="4.400" fill="#fff"/></g><path d="M29.9 1v22" stroke="#cfcff3" stroke-width="1"/><path d="M59.3 1v22" stroke="#cfcff3" stroke-width="1"/><rect x="0.5" y="0.5" width="117.6" height="23" rx="4" fill="none" stroke="#cdcdf3"/></svg>
<svg style="left:1799.3px;top:819.2px" width="59.8" height="24" viewBox="0 0 59.8 24"><defs><clipPath id="cp1799_819"><rect x="0.5" y="0.5" width="58.8" height="23" rx="4"/></clipPath></defs><rect x="0.5" y="0.5" width="58.8" height="23" rx="4" fill="#fff"/><g clip-path="url(#cp1799_819)"><rect x="0.5" y="0" width="29.4" height="24" fill="#0568fd"/><path d="M0.5 6.200c4.500-2.300 9.500-1.800 14.200 3.800 4.800 5.800 8.300 8.800 15.200 8.400" fill="none" stroke="#fff" stroke-width="2.3"/><path d="M30.9 9c3 3.500 8 5.200 13 5.600 5 .400 10 .100 15 .100" fill="none" stroke="#d5d5f2" stroke-width="1"/><path d="M29.9 7c4.500-2.800 9.500-2.300 14.200 3.300 4.800 5.800 8.300 8.800 15.200 8.400" fill="none" stroke="#9c9cac" stroke-width="1.500"/></g><rect x="0.5" y="0.5" width="58.8" height="23" rx="4" fill="none" stroke="#cdcdf3"/></svg>
<svg style="left:1515px;top:855px" width="358" height="217" viewBox="1515 855 358 217"><defs><linearGradient id="rb" gradientUnits="userSpaceOnUse" x1="0" x2="0" y1="915" y2="1072"><stop offset="0" stop-color="#ff4646"/><stop offset="1" stop-color="#ea1616"/></linearGradient></defs><path d="M1605 865.800H1850M1605 915H1850M1605 1013.300H1850M1605 1062.200H1850" stroke="#d4d4f4" stroke-width="1" stroke-dasharray="1 1"/><path d="M1605 964.300H1850" stroke="#d2d2f6" stroke-width="1"/><path d="M1611.8 1080V970.1a4.500 4.500 0 0 1 9 0V1080z" fill="url(#rb)"/><path d="M1630.2 1080V922.1a4.500 4.500 0 0 1 9 0V1080z" fill="url(#rb)"/><path d="M1704.2 1080V1069.1a4.500 4.500 0 0 1 9 0V1080z" fill="url(#rb)"/><path d="M1722.0 1080V1035.3a4.500 4.500 0 0 1 9 0V1080z" fill="url(#rb)"/><path d="M1759.3 1080V1075.1a4.500 4.500 0 0 1 9 0V1080z" fill="url(#rb)"/><path d="M1778.8 1080V1068.3a4.500 4.500 0 0 1 9 0V1080z" fill="url(#rb)"/><path d="M1796.8 1080V973.1a4.500 4.500 0 0 1 9 0V1080z" fill="url(#rb)"/><path d="M1814.3 1080V1039.1a4.500 4.500 0 0 1 9 0V1080z" fill="url(#rb)"/><path d="M1614.8 946.8L1617.0 950.6L1620.0 955.8L1623.5 961.9L1627.3 968.6L1631.3 975.2L1635.0 981.3L1638.6 986.9L1642.3 992.4L1646.1 998.0L1649.9 1003.5L1653.7 1009.2L1657.5 1015.0L1661.3 1021.3L1665.3 1028.1L1669.2 1035.1L1673.1 1041.7L1676.7 1047.7L1680.0 1052.6L1682.8 1056.4L1685.0 1059.5L1687.0 1061.9L1689.2 1063.7L1691.7 1065.1L1695.0 1066.0L1699.1 1066.3L1703.9 1065.8L1709.1 1064.8L1714.4 1063.6L1719.8 1062.5L1725.0 1061.6L1730.1 1061.1L1735.3 1060.8L1740.5 1060.5L1745.6 1060.2L1750.4 1059.6L1755.0 1058.6L1759.2 1057.1L1763.1 1055.3L1766.8 1053.2L1770.4 1051.0L1774.0 1048.9L1777.5 1047.0L1781.0 1045.1L1784.5 1043.0L1787.9 1041.0L1791.2 1039.4L1794.6 1038.4L1798.0 1038.3L1801.5 1039.5L1804.9 1041.9L1808.4 1044.9L1811.9 1048.0L1815.3 1050.7L1818.8 1052.6L1822.5 1053.5L1826.4 1053.9L1830.4 1053.8L1834.1 1053.6L1837.2 1053.4L1839.4 1053.3" fill="none" stroke="#f23030" stroke-width="0.900" stroke-dasharray="6 3"/></svg>
<span class="t" id="t0" style="left:120.61px;top:13.97px;font-size:14.8px;font-weight:700;color:#2e2a27;letter-spacing:0.670px;">NET</span>
<span class="t" id="t1" style="left:151.23px;top:13.77px;font-size:14.8px;font-weight:400;color:#2e2a27;letter-spacing:1.182px;">SUITE</span>
<span class="t" id="t2" style="left:240.24px;top:8.96px;font-size:15.4px;font-weight:400;color:#1f2326;letter-spacing:0.648px;transform-origin:0 84.65%;transform:scale(1.0000,0.83);-webkit-text-stroke:0.300px;">Practice</span>
<span class="t" id="t3" style="left:277.45px;top:24.30px;font-size:11.7px;font-weight:400;color:#1f2326;letter-spacing:-0.120px;transform-origin:0 50%;transform:scaleX(0.8907);-webkit-text-stroke:0.200px;">ERP</span>
<span class="t" id="t4" style="left:701.23px;top:14.62px;font-size:12.5px;font-weight:400;color:#8c8c8c;letter-spacing:-0.146px;">Search</span>
<span class="t" id="t5" style="left:1559.64px;top:16.56px;font-size:10.8px;font-weight:400;color:#2b2b2b;letter-spacing:-0.120px;transform-origin:0 50%;transform:scaleX(0.9747);">Help</span>
<span class="t" id="t6" style="left:1621.69px;top:16.56px;font-size:10.8px;font-weight:400;color:#2b2b2b;letter-spacing:-0.120px;transform-origin:0 50%;transform:scaleX(0.9188);">Feedback</span>
<span class="t" id="t7" style="left:1711.02px;top:9.73px;font-size:11.9px;font-weight:400;color:#3a3a3a;letter-spacing:-0.100px;">Frank Goron</span>
<span class="t" id="t8" style="left:1711.56px;top:24.00px;font-size:10.4px;font-weight:400;color:#1f1f1f;letter-spacing:-0.120px;transform-origin:0 50%;transform:scaleX(0.9226);">Smith &amp; Jones CPAs, LLC - Partner</span>
<span class="t" id="t9" style="left:153.20px;top:57.87px;font-size:12.2px;font-weight:700;color:#fff;letter-spacing:0.289px;">Activities</span>
<span class="t" id="t10" style="left:230.18px;top:57.87px;font-size:12.2px;font-weight:700;color:#fff;letter-spacing:0.311px;">My CRM</span>
<span class="t" id="t11" style="left:299.68px;top:57.87px;font-size:12.2px;font-weight:700;color:#fff;letter-spacing:0.419px;">My Workspace</span>
<span class="t" id="t12" style="left:409.50px;top:57.87px;font-size:12.2px;font-weight:700;color:#fff;letter-spacing:0.227px;">Clients</span>
<span class="t" id="t13" style="left:471.68px;top:57.87px;font-size:12.2px;font-weight:700;color:#fff;letter-spacing:0.401px;">My Clients</span>
<span class="t" id="t14" style="left:555.68px;top:57.87px;font-size:12.2px;font-weight:700;color:#fff;letter-spacing:0.804px;">My Team</span>
<span class="t" id="t15" style="left:631.68px;top:57.87px;font-size:12.2px;font-weight:700;color:#fff;letter-spacing:0.328px;">Firm Analytics</span>
<span class="t" id="t16" style="left:739.68px;top:57.87px;font-size:12.2px;font-weight:700;color:#fff;letter-spacing:0.798px;">Help</span>
<span class="t" id="t17" style="left:788.65px;top:57.87px;font-size:12.2px;font-weight:700;color:#fff;letter-spacing:0.136px;">SuiteApps</span>
<span class="t" id="t18" style="left:870.40px;top:57.87px;font-size:12.2px;font-weight:700;color:#fff;letter-spacing:0.297px;">Support</span>
<span class="t" id="t19" style="left:17.49px;top:98.20px;font-size:18.9px;font-weight:700;color:#4d5f7a;letter-spacing:0.562px;">Firm Analytics</span>
<span class="t" id="t20" style="left:1711.50px;top:96.87px;font-size:12.2px;font-weight:400;color:#2456ad;letter-spacing:0.186px;">Personalize</span>
<span class="t" id="t21" style="left:1818.00px;top:96.87px;font-size:12.2px;font-weight:400;color:#2456ad;letter-spacing:0.499px;">Layout</span>
<span class="t" id="t22" style="left:31.34px;top:150.26px;font-size:14.1px;font-weight:400;color:#0c0c0c;letter-spacing:0.595px;-webkit-text-stroke:0.3px;">Reminders</span>
<span class="t" id="t23" style="left:41.00px;top:179.28px;font-size:23px;font-weight:400;color:#1c1c1c;letter-spacing:1.562px;">82</span>
<span class="t" id="t24" style="left:41.42px;top:208.37px;font-size:12.2px;font-weight:400;color:#2456ad;letter-spacing:-0.073px;">Overdue Projects (A/B Clients)</span>
<span class="t" id="t25" style="left:42.00px;top:234.03px;font-size:23px;font-weight:400;color:#1c1c1c;letter-spacing:0.125px;">151</span>
<span class="t" id="t26" style="left:41.42px;top:261.17px;font-size:12.2px;font-weight:400;color:#2456ad;letter-spacing:0.032px;">Overdue Projects by (Department Manager)</span>
<span class="t" id="t27" style="left:32.18px;top:316.26px;font-size:14.1px;font-weight:400;color:#0c0c0c;letter-spacing:0.086px;-webkit-text-stroke:0.3px;">Top 5 Clients By Sales</span>
<span class="t" id="t28" style="left:35.32px;top:351.87px;font-size:12.2px;font-weight:400;color:#30303a;letter-spacing:0.126px;-webkit-text-stroke:0.18px;">this year to date</span>
<span class="t" id="t29" style="left:154.15px;top:674.89px;font-size:11px;font-weight:400;color:#666;letter-spacing:-0.180px;">40.00K</span>
<span class="t" id="t30" style="left:283.72px;top:674.89px;font-size:11px;font-weight:400;color:#666;letter-spacing:-0.135px;">80.00K</span>
<span class="t" id="t31" style="left:127.11px;top:703.02px;font-size:9.9px;font-weight:400;color:#444;letter-spacing:0.638px;-webkit-text-stroke:0.18px;">06520 Bravo Wellness</span>
<span class="t" id="t32" style="left:126.75px;top:714.27px;font-size:9.9px;font-weight:400;color:#444;letter-spacing:0.585px;-webkit-text-stroke:0.18px;">14627 Saladino&#x27;s, Inc.</span>
<span class="t" id="t33" style="left:127.00px;top:725.52px;font-size:9.9px;font-weight:400;color:#444;letter-spacing:0.510px;-webkit-text-stroke:0.18px;">24255 Epiphany</span>
<span class="t" id="t34" style="left:127.46px;top:736.77px;font-size:9.9px;font-weight:400;color:#444;letter-spacing:0.420px;-webkit-text-stroke:0.18px;">WF:00001.001 Pawtucket Ri City Of</span>
<span class="t" id="t35" style="left:127.04px;top:748.02px;font-size:9.9px;font-weight:400;color:#444;letter-spacing:0.474px;-webkit-text-stroke:0.18px;">99900: PS GPS Insight</span>
<span class="t" id="t36" style="left:32.18px;top:804.76px;font-size:14.1px;font-weight:400;color:#0c0c0c;letter-spacing:0.207px;-webkit-text-stroke:0.3px;">Top 5 Clients By Balance</span>
<span class="t" id="t37" style="left:34.98px;top:840.87px;font-size:12.2px;font-weight:400;color:#30303a;letter-spacing:0.061px;-webkit-text-stroke:0.18px;">end of this week</span>
<span class="t" id="t38" style="right:1805.68px;top:906.14px;font-size:11px;font-weight:400;color:#666;letter-spacing:0.000px;">100.00K</span>
<span class="t" id="t39" style="right:1805.68px;top:958.24px;font-size:11px;font-weight:400;color:#666;letter-spacing:0.000px;">80.00K</span>
<span class="t" id="t40" style="right:1805.68px;top:1011.14px;font-size:11px;font-weight:400;color:#666;letter-spacing:0.000px;">60.00K</span>
<span class="t" id="t41" style="right:1805.68px;top:1062.94px;font-size:11px;font-weight:400;color:#666;letter-spacing:0.000px;">40.00K</span>
<span class="t" id="t42" style="left:415.84px;top:150.26px;font-size:14.1px;font-weight:400;color:#0c0c0c;letter-spacing:0.510px;-webkit-text-stroke:0.3px;">Key Performance Indicators</span>
<span class="t" id="t43" style="left:428.61px;top:190.15px;font-size:10.1px;font-weight:400;color:#565656;letter-spacing:-0.120px;-webkit-text-stroke:0.3px;transform-origin:0 50%;transform:scaleX(0.9520);">NEW CLIENTS</span>
<span class="t" id="t44" style="left:700.04px;top:190.15px;font-size:10.1px;font-weight:400;color:#565656;letter-spacing:-0.120px;-webkit-text-stroke:0.3px;transform-origin:0 50%;transform:scaleX(0.9608);">OPEN WIP +60 DAYS (BY PARTNER)</span>
<span class="t" id="t45" style="left:971.04px;top:190.15px;font-size:10.1px;font-weight:400;color:#565656;letter-spacing:-0.120px;-webkit-text-stroke:0.3px;transform-origin:0 50%;transform:scaleX(0.9613);">OPEN AR +60 DAYS (BY PARTNER)</span>
<span class="t" id="t46" style="left:1242.34px;top:190.15px;font-size:10.1px;font-weight:400;color:#565656;letter-spacing:-0.120px;-webkit-text-stroke:0.3px;transform-origin:0 50%;transform:scaleX(0.8910);">SALES</span>
<span class="t" id="t47" style="left:446.39px;top:224.25px;font-size:21.8px;font-weight:400;color:#5b5b5b;letter-spacing:0.518px;">63.7%</span>
<span class="t" id="t48" style="left:701.27px;top:224.25px;font-size:21.8px;font-weight:400;color:#5b5b5b;letter-spacing:0.610px;">$749,946</span>
<span class="t" id="t49" style="left:972.27px;top:224.25px;font-size:21.8px;font-weight:400;color:#5b5b5b;letter-spacing:0.566px;">$1,766,136</span>
<span class="t" id="t50" style="left:1260.05px;top:224.25px;font-size:21.8px;font-weight:400;color:#5b5b5b;letter-spacing:0.346px;">8.6%</span>
<span class="t" id="t51" style="left:470.39px;top:312.99px;font-size:9.7px;font-weight:700;color:#333;letter-spacing:-0.120px;transform-origin:0 50%;transform:scaleX(0.9391);">INDICATOR</span>
<span class="t" id="t52" style="left:795.42px;top:312.99px;font-size:9.7px;font-weight:700;color:#333;letter-spacing:-0.120px;transform-origin:0 50%;transform:scaleX(0.8873);">PERIOD</span>
<span class="t" id="t53" style="left:1166.16px;top:312.99px;font-size:9.7px;font-weight:700;color:#333;letter-spacing:-0.120px;transform-origin:0 50%;transform:scaleX(0.8670);">CURRENT</span>
<span class="t" id="t54" style="left:1279.43px;top:312.99px;font-size:9.7px;font-weight:700;color:#333;letter-spacing:-0.120px;transform-origin:0 50%;transform:scaleX(0.8816);">PREVIOUS</span>
<span class="t" id="t55" style="left:1393.65px;top:312.99px;font-size:9.7px;font-weight:700;color:#333;letter-spacing:-0.120px;transform-origin:0 50%;transform:scaleX(0.8816);">CHANGE</span>
<span class="t" id="t56" style="left:470.22px;top:336.38px;font-size:11.6px;font-weight:700;color:#262626;letter-spacing:0.153px;">New Clients</span>
<span class="t" id="t57" style="left:470.45px;top:357.08px;font-size:11.6px;font-weight:400;color:#3a3a3a;letter-spacing:-0.009px;">Open WIP +60 Days (By Department)</span>
<span class="t" id="t58" style="left:470.52px;top:379.38px;font-size:11.6px;font-weight:700;color:#262626;letter-spacing:0.021px;">Open WIP +60 Days (By Partner)</span>
<span class="t" id="t59" style="left:470.52px;top:401.38px;font-size:11.6px;font-weight:700;color:#262626;letter-spacing:-0.019px;">Open AR +60 Days (By Partner)</span>
<span class="t" id="t60" style="left:470.05px;top:422.38px;font-size:11.6px;font-weight:400;color:#3a3a3a;letter-spacing:-0.129px;">Receivables</span>
<span class="t" id="t61" style="left:470.68px;top:444.38px;font-size:11.6px;font-weight:700;color:#262626;letter-spacing:-0.120px;transform-origin:0 50%;transform:scaleX(0.9648);">Sales</span>
<span class="t" id="t62" style="left:795.87px;top:336.38px;font-size:11.6px;font-weight:700;color:#2456ad;letter-spacing:0.048px;">This Year to Date <span style="position:static;color:#2b3550">vs.</span> Last Fiscal Year to Date</span>
<span class="t" id="t63" style="left:795.41px;top:357.08px;font-size:11.6px;font-weight:400;color:#2456ad;letter-spacing:0.292px;">Current</span>
<span class="t" id="t64" style="left:795.52px;top:379.38px;font-size:11.6px;font-weight:700;color:#2456ad;letter-spacing:0.290px;">Current</span>
<span class="t" id="t65" style="left:795.52px;top:401.38px;font-size:11.6px;font-weight:700;color:#2456ad;letter-spacing:0.290px;">Current</span>
<span class="t" id="t66" style="left:795.74px;top:422.38px;font-size:11.6px;font-weight:400;color:#2456ad;letter-spacing:-0.032px;">Today <span style="position:static;color:#2b3550">vs.</span> Same Day Last Month</span>
<span class="t" id="t67" style="left:795.87px;top:444.38px;font-size:11.6px;font-weight:700;color:#2456ad;letter-spacing:0.048px;">This Year to Date <span style="position:static;color:#2b3550">vs.</span> Last Fiscal Year to Date</span>
<span class="t" id="t68" style="left:1165.77px;top:336.38px;font-size:11.6px;font-weight:700;color:#2456ad;letter-spacing:0.134px;">1,065</span>
<span class="t" id="t69" style="left:1166.38px;top:357.08px;font-size:11.6px;font-weight:400;color:#2456ad;letter-spacing:-0.032px;">$749,946</span>
<span class="t" id="t70" style="left:1166.35px;top:379.38px;font-size:11.6px;font-weight:700;color:#2456ad;letter-spacing:-0.041px;">$749,946</span>
<span class="t" id="t71" style="left:1166.35px;top:401.38px;font-size:11.6px;font-weight:700;color:#2456ad;letter-spacing:0.005px;">$1,766,136</span>
<span class="t" id="t72" style="left:1166.38px;top:422.38px;font-size:11.6px;font-weight:400;color:#2456ad;letter-spacing:-0.204px;">$3,412,721</span>
<span class="t" id="t73" style="left:1166.35px;top:444.38px;font-size:11.6px;font-weight:700;color:#2456ad;letter-spacing:0.005px;">$4,230,786</span>
<span class="t" id="t74" style="left:1279.60px;top:336.38px;font-size:11.6px;font-weight:700;color:#2456ad;letter-spacing:-0.073px;">2,931</span>
<span class="t" id="t75" style="left:1279.88px;top:422.38px;font-size:11.6px;font-weight:400;color:#2456ad;letter-spacing:-0.095px;">$4,415,099</span>
<span class="t" id="t76" style="left:1279.85px;top:444.38px;font-size:11.6px;font-weight:700;color:#2456ad;letter-spacing:0.034px;">$4,629,569</span>
<span class="t" id="t77" style="left:1415.19px;top:334.30px;font-size:11.1px;font-weight:700;color:#262626;letter-spacing:0.258px;">63.7%</span>
<span class="t" id="t78" style="left:1415.04px;top:421.80px;font-size:11.1px;font-weight:400;color:#3a3a3a;letter-spacing:-0.029px;">22.7%</span>
<span class="t" id="t79" style="left:1415.25px;top:443.50px;font-size:11.1px;font-weight:700;color:#262626;letter-spacing:0.183px;">8.6%</span>
<span class="t" id="t80" style="left:415.84px;top:509.26px;font-size:14.1px;font-weight:400;color:#0c0c0c;letter-spacing:0.392px;-webkit-text-stroke:0.3px;">Billed WIP and Realization by Partner</span>
<span class="t" id="t81" style="left:484.41px;top:544.04px;font-size:12.0px;font-weight:400;color:#222;letter-spacing:-0.120px;transform-origin:0 50%;transform:scaleX(0.9818);">2227352 — 1551017</span>
<span class="t" id="t82" style="left:626.75px;top:546.55px;font-size:11.4px;font-weight:400;color:#333;letter-spacing:-0.120px;transform-origin:0 50%;transform:scaleX(0.9612);">TOTAL:</span>
<span class="t" id="t83" style="left:665.48px;top:547.40px;font-size:10.4px;font-weight:400;color:#3a5fa0;letter-spacing:-0.032px;">21</span>
<span class="t" id="t84" style="left:429.16px;top:585.57px;font-size:10.2px;font-weight:400;color:#4a4a4a;letter-spacing:0.672px;-webkit-text-stroke:0.3px;">Firm Partner</span>
<span class="t" id="t85" style="left:590.27px;top:585.57px;font-size:10.2px;font-weight:400;color:#4a4a4a;letter-spacing:0.607px;-webkit-text-stroke:0.3px;">Total Hours</span>
<span class="t" id="t86" style="left:706.52px;top:585.57px;font-size:10.2px;font-weight:400;color:#4a4a4a;letter-spacing:0.755px;-webkit-text-stroke:0.3px;">Original Amount</span>
<span class="t" id="t87" style="left:849.98px;top:585.57px;font-size:10.2px;font-weight:400;color:#4a4a4a;letter-spacing:0.790px;-webkit-text-stroke:0.3px;">Adjusted Amount</span>
<span class="t" id="t88" style="left:994.98px;top:585.57px;font-size:10.2px;font-weight:400;color:#4a4a4a;letter-spacing:0.801px;-webkit-text-stroke:0.3px;">Amount Billed</span>
<span class="t" id="t89" style="left:1124.16px;top:585.57px;font-size:10.2px;font-weight:400;color:#4a4a4a;letter-spacing:0.669px;-webkit-text-stroke:0.3px;">Realization</span>
<span class="t" id="t90" style="left:1242.52px;top:585.57px;font-size:10.2px;font-weight:400;color:#4a4a4a;letter-spacing:0.426px;-webkit-text-stroke:0.3px;">Original Rate (Avg)</span>
<span class="t" id="t91" style="left:1393.16px;top:585.57px;font-size:10.2px;font-weight:400;color:#4a4a4a;letter-spacing:0.406px;-webkit-text-stroke:0.3px;">Billed Rate (Avg)</span>
<span class="t" id="t92" style="left:429.76px;top:605.91px;font-size:10.5px;font-weight:400;color:#2456ad;letter-spacing:0.087px;">Tim Olvera</span>
<span class="t" id="t93" style="left:429.14px;top:622.91px;font-size:10.5px;font-weight:400;color:#2456ad;letter-spacing:0.084px;">Kim Johnson</span>
<span class="t" id="t94" style="left:429.14px;top:638.91px;font-size:10.5px;font-weight:400;color:#2456ad;letter-spacing:0.326px;">Diane Wideburg</span>
<span class="t" id="t95" style="left:429.14px;top:655.91px;font-size:10.5px;font-weight:400;color:#2456ad;letter-spacing:0.213px;">Brett Devries</span>
<span class="t" id="t96" style="left:429.14px;top:672.91px;font-size:10.5px;font-weight:400;color:#2456ad;letter-spacing:0.234px;">Doug Richardt</span>
<span class="t" id="t97" style="left:429.57px;top:689.91px;font-size:10.5px;font-weight:700;color:#2456ad;letter-spacing:0.362px;">Overall Total</span>
<span class="t" id="t98" style="right:1241.06px;top:605.91px;font-size:10.5px;font-weight:400;color:#2e2e2e;letter-spacing:0.000px;">20,051.5</span>
<span class="t" id="t99" style="right:1099.09px;top:605.91px;font-size:10.5px;font-weight:400;color:#2e2e2e;letter-spacing:0.000px;">2,594,394.00</span>
<span class="t" id="t100" style="right:950.35px;top:605.91px;font-size:10.5px;font-weight:400;color:#2e2e2e;letter-spacing:0.000px;">(367,042.00)</span>
<span class="t" id="t101" style="right:814.09px;top:605.91px;font-size:10.5px;font-weight:400;color:#2e2e2e;letter-spacing:0.000px;">2,227,352.00</span>
<span class="t" id="t102" style="right:708.03px;top:605.91px;font-size:10.5px;font-weight:400;color:#2e2e2e;letter-spacing:0.000px;">85.85%</span>
<span class="t" id="t103" style="right:552.50px;top:605.91px;font-size:10.5px;font-weight:400;color:#2e2e2e;letter-spacing:0.000px;">129.39</span>
<span class="t" id="t104" style="right:413.24px;top:605.91px;font-size:10.5px;font-weight:400;color:#2e2e2e;letter-spacing:0.000px;">111.08</span>
<span class="t" id="t105" style="right:1240.97px;top:622.91px;font-size:10.5px;font-weight:400;color:#2e2e2e;letter-spacing:0.000px;">14,211.52</span>
<span class="t" id="t106" style="right:1099.09px;top:622.91px;font-size:10.5px;font-weight:400;color:#2e2e2e;letter-spacing:0.000px;">2,096,918.00</span>
<span class="t" id="t107" style="right:950.35px;top:622.91px;font-size:10.5px;font-weight:400;color:#2e2e2e;letter-spacing:0.000px;">(176,475.00)</span>
<span class="t" id="t108" style="right:814.09px;top:622.91px;font-size:10.5px;font-weight:400;color:#2e2e2e;letter-spacing:0.000px;">1,920,443.00</span>
<span class="t" id="t109" style="right:708.03px;top:622.91px;font-size:10.5px;font-weight:400;color:#2e2e2e;letter-spacing:0.000px;">91.58%</span>
<span class="t" id="t110" style="right:552.56px;top:622.91px;font-size:10.5px;font-weight:400;color:#2e2e2e;letter-spacing:0.000px;">147.55</span>
<span class="t" id="t111" style="right:413.24px;top:622.91px;font-size:10.5px;font-weight:400;color:#2e2e2e;letter-spacing:0.000px;">135.13</span>
<span class="t" id="t112" style="right:1240.97px;top:638.91px;font-size:10.5px;font-weight:400;color:#2e2e2e;letter-spacing:0.000px;">16,773.22</span>
<span class="t" id="t113" style="right:1099.09px;top:638.91px;font-size:10.5px;font-weight:400;color:#2e2e2e;letter-spacing:0.000px;">2,353,277.00</span>
<span class="t" id="t114" style="right:950.35px;top:638.91px;font-size:10.5px;font-weight:400;color:#2e2e2e;letter-spacing:0.000px;">(693,988.00)</span>
<span class="t" id="t115" style="right:814.09px;top:638.91px;font-size:10.5px;font-weight:400;color:#2e2e2e;letter-spacing:0.000px;">1,659,289.00</span>
<span class="t" id="t116" style="right:708.03px;top:638.91px;font-size:10.5px;font-weight:400;color:#2e2e2e;letter-spacing:0.000px;">70.51%</span>
<span class="t" id="t117" style="right:552.59px;top:638.91px;font-size:10.5px;font-weight:400;color:#2e2e2e;letter-spacing:0.000px;">140.30</span>
<span class="t" id="t118" style="right:413.17px;top:638.91px;font-size:10.5px;font-weight:400;color:#2e2e2e;letter-spacing:0.000px;">98.92</span>
<span class="t" id="t119" style="right:1241.04px;top:655.91px;font-size:10.5px;font-weight:400;color:#2e2e2e;letter-spacing:0.000px;">12,195.8</span>
<span class="t" id="t120" style="right:1099.09px;top:655.91px;font-size:10.5px;font-weight:400;color:#2e2e2e;letter-spacing:0.000px;">1,749,570.00</span>
<span class="t" id="t121" style="right:950.35px;top:655.91px;font-size:10.5px;font-weight:400;color:#2e2e2e;letter-spacing:0.000px;">(137,733.00)</span>
<span class="t" id="t122" style="right:814.09px;top:655.91px;font-size:10.5px;font-weight:400;color:#2e2e2e;letter-spacing:0.000px;">1,611,836.00</span>
<span class="t" id="t123" style="right:708.03px;top:655.91px;font-size:10.5px;font-weight:400;color:#2e2e2e;letter-spacing:0.000px;">92.13%</span>
<span class="t" id="t124" style="right:552.54px;top:655.91px;font-size:10.5px;font-weight:400;color:#2e2e2e;letter-spacing:0.000px;">143.46</span>
<span class="t" id="t125" style="right:413.24px;top:655.91px;font-size:10.5px;font-weight:400;color:#2e2e2e;letter-spacing:0.000px;">132.16</span>
<span class="t" id="t126" style="right:1241.04px;top:672.91px;font-size:10.5px;font-weight:400;color:#2e2e2e;letter-spacing:0.000px;">13,372.73</span>
<span class="t" id="t127" style="right:1099.09px;top:672.91px;font-size:10.5px;font-weight:400;color:#2e2e2e;letter-spacing:0.000px;">2,028,467.00</span>
<span class="t" id="t128" style="right:950.35px;top:672.91px;font-size:10.5px;font-weight:400;color:#2e2e2e;letter-spacing:0.000px;">(477,450.00)</span>
<span class="t" id="t129" style="right:814.09px;top:672.91px;font-size:10.5px;font-weight:400;color:#2e2e2e;letter-spacing:0.000px;">1,551,017.00</span>
<span class="t" id="t130" style="right:708.03px;top:672.91px;font-size:10.5px;font-weight:400;color:#2e2e2e;letter-spacing:0.000px;">76.46%</span>
<span class="t" id="t131" style="right:552.50px;top:672.91px;font-size:10.5px;font-weight:400;color:#2e2e2e;letter-spacing:0.000px;">151.69</span>
<span class="t" id="t132" style="right:413.24px;top:672.91px;font-size:10.5px;font-weight:400;color:#2e2e2e;letter-spacing:0.000px;">115.98</span>
<span class="t" id="t133" style="right:1241.22px;top:689.91px;font-size:10.5px;font-weight:700;color:#1e1e1e;letter-spacing:-0.100px;">152,063.3</span>
<span class="t" id="t134" style="right:1099.17px;top:689.91px;font-size:10.5px;font-weight:700;color:#1e1e1e;letter-spacing:-0.100px;">21,183,221.00</span>
<span class="t" id="t135" style="right:950.58px;top:689.91px;font-size:10.5px;font-weight:700;color:#1e1e1e;letter-spacing:-0.100px;">(4,979,139.00)</span>
<span class="t" id="t136" style="right:814.17px;top:689.91px;font-size:10.5px;font-weight:700;color:#1e1e1e;letter-spacing:-0.100px;">16,204,082.00</span>
<span class="t" id="t137" style="left:415.84px;top:796.26px;font-size:14.1px;font-weight:400;color:#0c0c0c;letter-spacing:0.461px;-webkit-text-stroke:0.3px;">Monthly Receivables Trend</span>
<span class="t" id="t138" style="left:419.50px;top:832.87px;font-size:12.2px;font-weight:400;color:#30303a;letter-spacing:0.473px;-webkit-text-stroke:0.18px;">Monthly</span>
<span class="t" id="t139" style="right:1429.50px;top:881.64px;font-size:11px;font-weight:400;color:#666;letter-spacing:0.000px;">6.00M</span>
<span class="t" id="t140" style="right:1429.50px;top:931.14px;font-size:11px;font-weight:400;color:#666;letter-spacing:0.000px;">5.00M</span>
<span class="t" id="t141" style="right:1429.50px;top:979.14px;font-size:11px;font-weight:400;color:#666;letter-spacing:0.000px;">4.00M</span>
<span class="t" id="t142" style="right:1429.50px;top:1029.14px;font-size:11px;font-weight:400;color:#666;letter-spacing:0.000px;">3.00M</span>
<span class="t" id="t143" style="left:1529.97px;top:150.26px;font-size:14.1px;font-weight:400;color:#0c0c0c;letter-spacing:0.257px;-webkit-text-stroke:0.3px;">AICPA - The American Institute of CPAs</span>
<span class="t" id="t144" style="left:1529.36px;top:210.76px;font-size:14.1px;font-weight:400;color:#0c0c0c;letter-spacing:0.208px;-webkit-text-stroke:0.3px;">Sales by LOB (Firm Analytics)</span>
<span class="t" id="t145" style="left:1532.68px;top:246.37px;font-size:12.2px;font-weight:400;color:#30303a;letter-spacing:0.134px;-webkit-text-stroke:0.18px;">last year to date</span>
<span class="t" id="t146" style="left:1583.10px;top:617.40px;font-size:9.8px;font-weight:400;color:#3c3c3c;letter-spacing:0.224px;">INDIVIDUAL TAX</span>
<span class="t" id="t147" style="left:1583.20px;top:628.90px;font-size:9.8px;font-weight:400;color:#3c3c3c;letter-spacing:0.272px;">BUSINESS TAX</span>
<span class="t" id="t148" style="left:1583.98px;top:640.40px;font-size:9.8px;font-weight:400;color:#3c3c3c;letter-spacing:0.333px;">ADVISORY SERVICE</span>
<span class="t" id="t149" style="left:1724.30px;top:617.40px;font-size:9.8px;font-weight:400;color:#3c3c3c;letter-spacing:0.696px;">CAS</span>
<span class="t" id="t150" style="left:1724.78px;top:628.90px;font-size:9.8px;font-weight:400;color:#3c3c3c;letter-spacing:0.232px;">ASSURANCE</span>
<span class="t" id="t151" style="left:1724.78px;top:640.40px;font-size:9.8px;font-weight:400;color:#3c3c3c;letter-spacing:0.560px;">ADMIN</span>
<span class="t" id="t152" style="left:1529.34px;top:700.26px;font-size:14.1px;font-weight:400;color:#0c0c0c;letter-spacing:0.348px;-webkit-text-stroke:0.3px;">Employee&#x27;s Missed Budget</span>
<span class="t" id="t153" style="left:1529.34px;top:760.76px;font-size:14.1px;font-weight:400;color:#0c0c0c;letter-spacing:0.449px;-webkit-text-stroke:0.3px;">Monthly Sales Trend</span>
<span class="t" id="t154" style="left:1533.00px;top:796.57px;font-size:12.2px;font-weight:400;color:#30303a;letter-spacing:0.390px;-webkit-text-stroke:0.18px;">Monthly</span>
<span class="t" id="t155" style="right:296.68px;top:861.34px;font-size:11px;font-weight:400;color:#666;letter-spacing:0.000px;">3,000.00K</span>
<span class="t" id="t156" style="right:296.68px;top:910.34px;font-size:11px;font-weight:400;color:#666;letter-spacing:0.000px;">2,500.00K</span>
<span class="t" id="t157" style="right:296.68px;top:958.34px;font-size:11px;font-weight:400;color:#666;letter-spacing:0.000px;">2,000.00K</span>
<span class="t" id="t158" style="right:296.68px;top:1008.24px;font-size:11px;font-weight:400;color:#666;letter-spacing:0.000px;">1,500.00K</span>
<span class="t" id="t159" style="right:296.68px;top:1057.34px;font-size:11px;font-weight:400;color:#666;letter-spacing:0.000px;">1,000.00K</span>
</div></body></html>
